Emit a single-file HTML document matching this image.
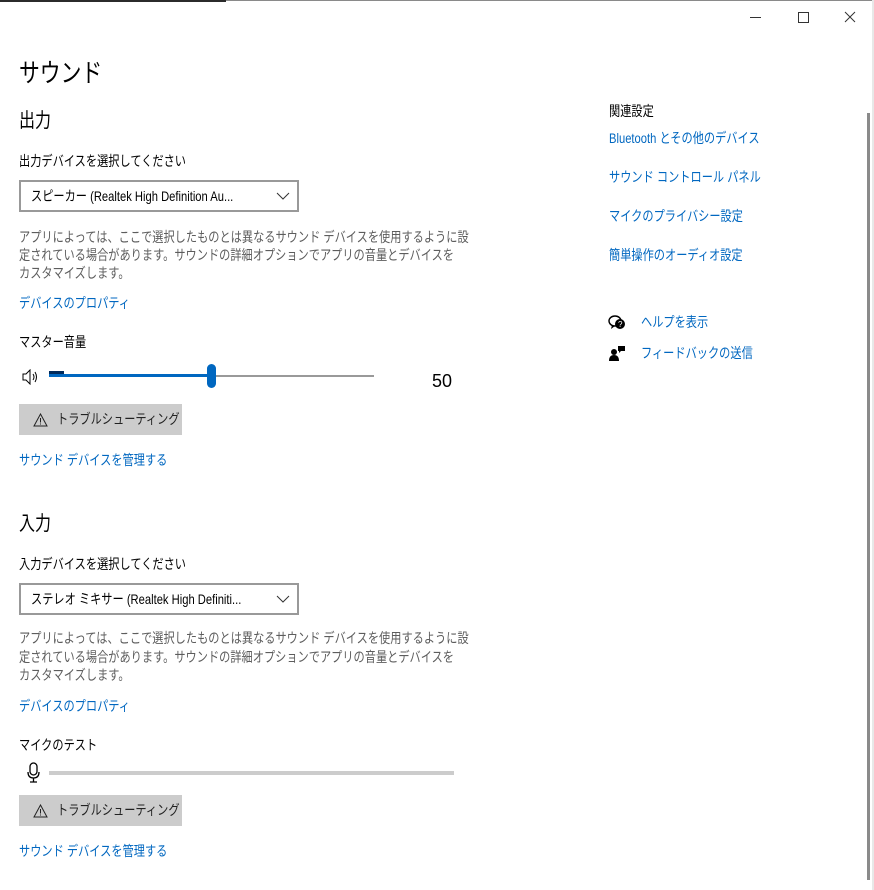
<!DOCTYPE html>
<html><head><meta charset="utf-8"><style>
html,body{margin:0;padding:0;width:874px;height:890px;overflow:hidden;background:#fff;font-family:"Liberation Sans","Noto Sans CJK JP",sans-serif;color:#000}
.t{position:absolute;white-space:nowrap;transform-origin:0 50%;transform:scaleX(0.8);line-height:1;font-size:14px}
.g{color:#5d5d5d}
.b{color:#0067c0}
.dd{position:absolute;left:19px;width:276px;height:28px;border:2px solid #999;box-sizing:content-box}
.btn{position:absolute;left:19px;width:163px;height:31px;background:#cccccc}
</style></head><body>
<div style="position:absolute;left:0;top:0;width:226px;height:2px;background:#2b2b2b"></div>
<div style="position:absolute;left:226px;top:0;width:648px;height:1px;background:#8a8a8a"></div>
<div style="position:absolute;left:872px;top:0;width:2px;height:890px;background:#e8e8e8"></div>
<div style="position:absolute;left:867px;top:113px;width:3px;height:767px;background:#8a8a8a"></div>
<div style="position:absolute;left:750px;top:17px;width:11px;height:1px;background:#333"></div>
<div style="position:absolute;left:798px;top:12px;width:9px;height:9px;border:1px solid #333"></div>
<svg style="position:absolute;left:844px;top:11px" width="12" height="12"><path d="M1 1L11 11M11 1L1 11" stroke="#333" stroke-width="1"/></svg>

<div class="t" style="left:19px;top:60px;font-size:26px;">サウンド</div>
<div class="t" style="left:19px;top:111px;font-size:20px;">出力</div>
<div class="t" style="left:19px;top:154px;">出力デバイスを選択してください</div>
<div class="dd" style="top:180px"></div>
<div class="t" style="left:31px;top:189px;">スピーカー (Realtek High Definition Au...</div>
<svg style="position:absolute;left:276px;top:192px" width="14" height="8"><path d="M1 1L7 7L13 1" stroke="#333" fill="none"/></svg>
<div class="t g" style="left:19px;top:230px;">アプリによっては、ここで選択したものとは異なるサウンド デバイスを使用するように設</div>
<div class="t g" style="left:19px;top:248px;">定されている場合があります。サウンドの詳細オプションでアプリの音量とデバイスを</div>
<div class="t g" style="left:19px;top:266px;">カスタマイズします。</div>
<div class="t b" style="left:19px;top:296px;">デバイスのプロパティ</div>
<div class="t" style="left:19px;top:335px;">マスター音量</div>
<svg style="position:absolute;left:22px;top:369px" width="18" height="16"><path d="M1 5H4L8 1V15L4 11H1Z" stroke="#000" fill="none"/><path d="M11 5Q13 8 11 11M13 3Q16 8 13 13" stroke="#000" fill="none"/></svg>
<div style="position:absolute;left:49px;top:375px;width:325px;height:2px;background:#999"></div>
<div style="position:absolute;left:49px;top:374px;width:162px;height:3px;background:#0067c0"></div>
<div style="position:absolute;left:49px;top:371px;width:15px;height:3px;background:#002a5c"></div>
<div style="position:absolute;left:207px;top:364px;width:9px;height:24px;border-radius:5px;background:#0067c0"></div>
<div class="t" style="left:432px;top:372px;font-size:18px;transform:none">50</div>
<div class="btn" style="top:404px"></div>
<svg style="position:absolute;left:33px;top:413px" width="15" height="14"><path d="M7.5 1L14 13H1Z" stroke="#222" fill="none"/><path d="M7.5 5V9.5M7.5 10.5V11.5" stroke="#222"/></svg>
<div class="t" style="left:57px;top:412px;color:#222">トラブルシューティング</div>
<div class="t b" style="left:19px;top:453px;">サウンド デバイスを管理する</div>

<div class="t" style="left:19px;top:514px;font-size:20px;">入力</div>
<div class="t" style="left:19px;top:557px;">入力デバイスを選択してください</div>
<div class="dd" style="top:583px"></div>
<div class="t" style="left:31px;top:592px;">ステレオ ミキサー (Realtek High Definiti...</div>
<svg style="position:absolute;left:276px;top:595px" width="14" height="8"><path d="M1 1L7 7L13 1" stroke="#333" fill="none"/></svg>
<div class="t g" style="left:19px;top:631px;">アプリによっては、ここで選択したものとは異なるサウンド デバイスを使用するように設</div>
<div class="t g" style="left:19px;top:650px;">定されている場合があります。サウンドの詳細オプションでアプリの音量とデバイスを</div>
<div class="t g" style="left:19px;top:668px;">カスタマイズします。</div>
<div class="t b" style="left:19px;top:699px;">デバイスのプロパティ</div>
<div class="t" style="left:19px;top:738px;">マイクのテスト</div>
<svg style="position:absolute;left:26px;top:762px" width="16" height="22"><rect x="4" y="1" width="7" height="12" rx="3.5" stroke="#000" fill="none" stroke-width="1.3"/><path d="M2 10Q2 16 7.5 16Q13 16 13 10M7.5 16V20M4 20H11" stroke="#000" fill="none" stroke-width="1.3"/></svg>
<div style="position:absolute;left:49px;top:771px;width:405px;height:4px;background:#cccccc"></div>
<div class="btn" style="top:795px"></div>
<svg style="position:absolute;left:33px;top:804px" width="15" height="14"><path d="M7.5 1L14 13H1Z" stroke="#222" fill="none"/><path d="M7.5 5V9.5M7.5 10.5V11.5" stroke="#222"/></svg>
<div class="t" style="left:57px;top:803px;color:#222">トラブルシューティング</div>
<div class="t b" style="left:19px;top:844px;">サウンド デバイスを管理する</div>

<div class="t" style="left:609px;top:104px;">関連設定</div>
<div class="t b" style="left:609px;top:131px;">Bluetooth とその他のデバイス</div>
<div class="t b" style="left:609px;top:170px;">サウンド コントロール パネル</div>
<div class="t b" style="left:609px;top:209px;">マイクのプライバシー設定</div>
<div class="t b" style="left:609px;top:248px;">簡単操作のオーディオ設定</div>
<svg style="position:absolute;left:608px;top:314px" width="20" height="18"><ellipse cx="7" cy="7" rx="6" ry="5" stroke="#000" fill="none" stroke-width="1.4"/><path d="M4 11L3 15L7 12" fill="#000"/><circle cx="12" cy="10" r="5" fill="#000"/><text x="10" y="13" font-size="8" fill="#fff" font-family="Liberation Sans">?</text></svg>
<div class="t b" style="left:641px;top:315px;">ヘルプを表示</div>
<svg style="position:absolute;left:609px;top:344px" width="18" height="18"><circle cx="5" cy="8" r="3" fill="#000"/><path d="M0 17Q0 11 5 11Q10 11 10 17Z" fill="#000"/><path d="M9 2H16V7H12L10 9V7H9Z" fill="#000"/></svg>
<div class="t b" style="left:641px;top:346px;">フィードバックの送信</div>
</body></html>
